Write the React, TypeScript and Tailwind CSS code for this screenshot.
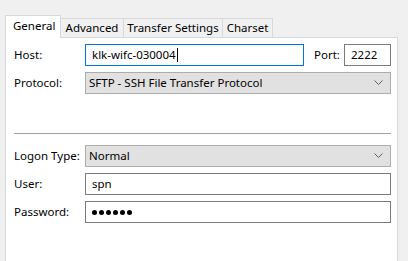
import React from 'react';

const font = { fontFamily: '"Segoe UI", "Noto Sans", "Liberation Sans", sans-serif' };

function Chevron() {
  return (
    <svg width="9" height="6" viewBox="0 0 9 6" className="shrink-0">
      <path d="M0.5 0.5 L4.5 4.5 L8.5 0.5" fill="none" stroke="#5f5f5f" strokeWidth="1" />
    </svg>
  );
}

function Select({ value, className = '' }: { value: string; className?: string }) {
  return (
    <div
      className={`h-[22px] flex items-center justify-between border border-[#adadad] bg-[#e1e1e1] pl-[3px] pr-[7px] ${className}`}
    >
      <span className="leading-none">{value}</span>
      <Chevron />
    </div>
  );
}

function Field({ children, className = '' }: { children?: React.ReactNode; className?: string }) {
  return (
    <div className={`h-[22px] flex items-center border border-[#7a7a7a] bg-white pl-[6px] ${className}`}>
      {children}
    </div>
  );
}

export default function App() {
  const tabs = ['Advanced', 'Transfer Settings', 'Charset'];

  return (
    <div
      className="w-[408px] h-[261px] overflow-hidden bg-[#f0f0f0] pt-[15px] pl-[5px] text-[11.5px] text-black"
      style={font}
    >
      {/* tab strip */}
      <div className="flex items-end h-[22px]">
        <div className="relative z-10 h-[23px] w-[56px] -mb-px border border-b-0 border-[#d9d9d9] bg-white flex items-center pl-[7px] pb-[2px]">
          General
        </div>
        <div className="flex items-end">
          {tabs.map((t, i) => (
            <div
              key={t}
              className={`h-[19px] flex items-center justify-center border-t border-r border-[#d9d9d9] bg-[#f0f0f0] ${
                i === 0 ? 'w-[63px]' : i === 1 ? 'w-[99px]' : 'w-[50px]'
              }`}
            >
              {t}
            </div>
          ))}
        </div>
      </div>

      {/* panel */}
      <div className="w-[393px] h-[240px] border border-[#d9d9d9] bg-white pl-[8px] pr-[6px] pt-[6px]">
        <div className="flex items-center h-[22px]">
          <span className="w-[71px]">Host:</span>
          <div className="h-[22px] w-[219px] flex items-center border border-[#0078d7] bg-white pl-[6px]">
            <span>klk-wifc-030004</span>
            <span className="ml-px w-px h-[14px] bg-black" />
          </div>
          <span className="ml-[10px] w-[30px]">Port:</span>
          <Field className="w-[47px]">2222</Field>
        </div>

        <div className="flex items-center h-[22px] mt-[6px]">
          <span className="w-[71px]">Protocol:</span>
          <Select value="SFTP - SSH File Transfer Protocol" className="w-[306px]" />
        </div>

        <div className="mt-[39px] h-[2px] border-t border-[#a0a0a0] border-b border-b-white" />

        <div className="flex items-center h-[22px] mt-[10px]">
          <span className="w-[71px]">Logon Type:</span>
          <Select value="Normal" className="w-[306px]" />
        </div>

        <div className="flex items-center h-[22px] mt-[6px]">
          <span className="w-[71px]">User:</span>
          <Field className="w-[306px]">spn</Field>
        </div>

        <div className="flex items-center h-[22px] mt-[6px]">
          <span className="w-[71px]">Password:</span>
          <Field className="w-[306px]">
            {[0, 1, 2, 3, 4, 5].map((d) => (
              <span key={d} className="w-[5px] h-[5px] rounded-full bg-black mr-[2px]" />
            ))}
          </Field>
        </div>
      </div>
    </div>
  );
}
